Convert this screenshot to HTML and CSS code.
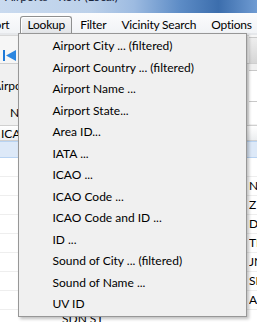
FILE: index.html
```html
<!DOCTYPE html>
<html lang="en">
<head>
    <meta charset="UTF-8">
    <meta name="viewport" content="width=device-width, initial-scale=1.0">
    <title>Airports - Row (Local)</title>
    <link rel="stylesheet" href="styles.css">
</head>
<body>
    <div class="titlebar">
        <span class="title">Airports - Row (Local)</span>
    </div>

    <nav class="menubar">
        <div class="menu-item first">Report</div>
        <div class="menu-item open">
            Lookup
            <ul class="dropdown">
                <li>Airport City ... (filtered)</li>
                <li>Airport Country ... (filtered)</li>
                <li>Airport Name ...</li>
                <li>Airport State...</li>
                <li>Area ID...</li>
                <li>IATA ...</li>
                <li>ICAO ...</li>
                <li>ICAO Code ...</li>
                <li>ICAO Code and ID ...</li>
                <li>ID ...</li>
                <li>Sound of City ... (filtered)</li>
                <li>Sound of Name ...</li>
                <li>UV ID</li>
            </ul>
        </div>
        <div class="menu-item">Filter</div>
        <div class="menu-item">Vicinity Search</div>
        <div class="menu-item">Options</div>
    </nav>

    <main class="window">
        <div class="toolbar">
            <div class="nav">
                <svg class="nav-first" width="14" height="11" viewBox="0 0 14 11">
                    <rect x="0" y="0" width="2" height="11" fill="#1f7ad8"/>
                    <polygon points="3,5.5 13,0 13,11" fill="#2b86e0"/>
                </svg>
            </div>
            <div class="tool-btn"></div>
        </div>

        <div class="form">
            <div class="field field-airport">
                <span class="label">Airport</span>
                <div class="box"></div>
            </div>
            <div class="field field-name">
                <span class="label">Name</span>
                <div class="box"></div>
            </div>
        </div>

        <div class="grid">
            <div class="grid-head">
                <span class="c-code">ICAO</span>
                <span class="c-name"></span>
                <span class="c-ctry"></span>
            </div>
            <div class="grid-row selected"><span class="c-code"></span><span class="c-name"></span><span class="c-ctry"></span></div>
            <div class="grid-row"><span class="c-code"></span><span class="c-name"></span><span class="c-ctry"></span></div>
            <div class="grid-row"><span class="c-code"></span><span class="c-name"></span><span class="c-ctry">NA</span></div>
            <div class="grid-row"><span class="c-code"></span><span class="c-name"></span><span class="c-ctry">Z N</span></div>
            <div class="grid-row"><span class="c-code"></span><span class="c-name"></span><span class="c-ctry">DE</span></div>
            <div class="grid-row"><span class="c-code"></span><span class="c-name"></span><span class="c-ctry">TH</span></div>
            <div class="grid-row"><span class="c-code"></span><span class="c-name"></span><span class="c-ctry">JN</span></div>
            <div class="grid-row"><span class="c-code"></span><span class="c-name"></span><span class="c-ctry">SE</span></div>
            <div class="grid-row"><span class="c-code"></span><span class="c-name"></span><span class="c-ctry">AU</span></div>
            <div class="grid-row"><span class="c-code"></span><span class="c-name">SDN ST</span><span class="c-ctry"></span></div>
        </div>
    </main>
</body>
</html>
```

FILE: styles.css
```css
* {
    box-sizing: border-box;
}

html, body {
    margin: 0;
}

body {
    width: 257px;
    height: 322px;
    overflow: hidden;
    font-family: Lato, "Open Sans", sans-serif;
    font-size: 12px;
    color: #000000;
    background-color: #f0f0f0;
}

/* window caption */
.titlebar {
    height: 13px;
    overflow: hidden;
    background: linear-gradient(90deg, #c9daef 0%, #bcd1ea 35%, #9dbbe1 52%, #5d8cc6 70%, #3c6ead 85%, #6f9bd2 100%);
}

.title {
    display: block;
    margin-top: -10px;
    padding-left: 5px;
    line-height: 14px;
    color: #18243a;
    white-space: nowrap;
}

/* menu bar */
.menubar {
    height: 20px;
    display: flex;
    align-items: flex-end;
    background: linear-gradient(#fbfcfd, #f1f3f6);
    position: relative;
    z-index: 5;
    letter-spacing: -0.2px;
}

.menu-item {
    height: 17px;
    line-height: 15px;
    padding: 0 6px;
    margin-right: 1px;
    border: 1px solid transparent;
    border-bottom: none;
    white-space: nowrap;
    position: relative;
}

.menu-item.first {
    margin-left: -32px;
    margin-right: 4px;
}

.menu-item.open {
    border-color: #8e8f8f;
    border-radius: 3px 3px 0 0;
    background: linear-gradient(#f4f5f6, #e3e5e8);
    box-shadow: inset 1px 1px 0 #ffffff;
}

.dropdown {
    position: absolute;
    left: -3px;
    top: 16px;
    width: 229px;
    height: 284px;
    margin: 0;
    padding: 1px 0 0;
    list-style: none;
    letter-spacing: normal;
    background-color: #f0f0f0;
    border: 1px solid #979797;
    box-shadow: 2px 2px 3px rgba(0, 0, 0, 0.25);
}

.dropdown li {
    height: 21.5px;
    line-height: 21.5px;
    padding-left: 33px;
    white-space: nowrap;
}

/* the window behind the menu */
.toolbar {
    height: 30px;
    display: flex;
    border-top: 2px solid #e6e8eb;
    background-color: #f6f6f6;
}

.nav {
    flex: 1;
    padding: 13px 0 0 3px;
    border-top: 1px solid #d8d8d8;
}

.tool-btn {
    width: 8px;
    margin-top: 2px;
    background: linear-gradient(#eeeeee, #d6d6d6);
    border-top: 1px solid #c9c9c9;
}

.form {
    height: 62px;
    border-top: 1px solid #cfcfcf;
    padding-top: 6px;
}

.field {
    display: flex;
    white-space: nowrap;
}

.field-airport {
    height: 31px;
    align-items: center;
}

.field-name {
    height: 23px;
    align-items: center;
}

.field .label {
    margin-left: -7px;
    line-height: 14px;
}

.field-name .label {
    margin-left: 10px;
}

.box {
    margin-left: auto;
    width: 8px;
    align-self: stretch;
    background-color: #ffffff;
    border-top: 1px solid #c8c8c8;
}

.grid {
    background-color: #ffffff;
}

.grid-head, .grid-row {
    display: flex;
    white-space: nowrap;
}

.grid-head {
    height: 16px;
    line-height: 15px;
    background: linear-gradient(#ffffff, #eceef0);
    border-top: 1px solid #d0d0d0;
    border-bottom: 1px solid #d0d0d0;
}

.grid-row {
    height: 19px;
    line-height: 18px;
    border-bottom: 1px solid #eeeeee;
}

.grid-row.selected {
    height: 17px;
    background-color: #dde9f8;
    border-top: 1px solid #b8d3f2;
    border-bottom: 1px solid #b8d3f2;
}

.c-code {
    width: 62px;
    padding-left: 1px;
    overflow: hidden;
}

.c-name {
    width: 187px;
    overflow: hidden;
}

.c-ctry {
    width: 8px;
    overflow: hidden;
}
```
